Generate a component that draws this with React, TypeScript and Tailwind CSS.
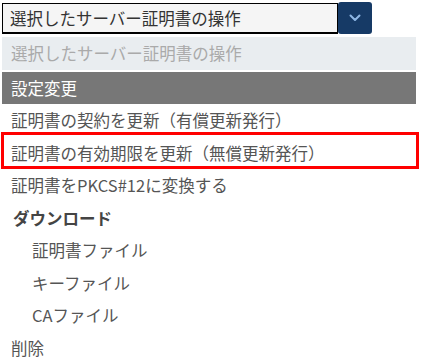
import React from "react";

export default function App() {
  const font = { fontFamily: '"Noto Sans CJK JP", "Noto Sans", sans-serif' };
  return (
    <div className="w-[424px] h-[360px] bg-white overflow-hidden text-[16.5px] text-[#555]" style={font}>
      <div className="flex items-start pt-[2px] pl-[2px]">
        <div className="w-[336px] h-[31px] mt-[1px] border border-black border-b-2 bg-[#f5f5f5] flex items-center pl-[7px] text-[#333] leading-none">
          選択したサーバー証明書の操作
        </div>
        <div className="w-[34px] h-[32px] bg-[#163a66] rounded-[3px] flex items-center justify-center">
          <svg width="12" height="8" viewBox="0 0 12 8" fill="none">
            <path d="M1.5 1.5 L6 6 L10.5 1.5" stroke="#8fb8e6" strokeWidth="2" strokeLinecap="round" strokeLinejoin="round" />
          </svg>
        </div>
      </div>
      <div className="ml-[2px] w-[414px] flex flex-col mt-[3px]">
        <div className="h-[33px] shrink-0 bg-[#e9edf0] flex items-center pl-[9px] text-[#aaa] leading-none">選択したサーバー証明書の操作</div>
        <div className="h-[32px] shrink-0 mt-[2px] bg-[#777777] flex items-center pl-[9px] text-white leading-none">設定変更</div>
        <div className="h-[33px] shrink-0 flex items-center pl-[9px] leading-none">証明書の契約を更新（有償更新発行）</div>
        <div className="relative h-[32px] shrink-0 flex items-center pl-[9px] leading-none">
          証明書の有効期限を更新（無償更新発行）
          <div className="absolute -left-[1px] -right-[3px] -top-[5px] -bottom-[0px] border-[3px] border-[#ff0000]" />
        </div>
        <div className="h-[33px] shrink-0 flex items-center pl-[9px] leading-none">証明書をPKCS#12に変換する</div>
        <div className="h-[32px] shrink-0 flex items-center pl-[11px] font-bold text-[#444] leading-none">ダウンロード</div>
        <div className="h-[33px] shrink-0 flex items-center pl-[30px] leading-none">証明書ファイル</div>
        <div className="h-[32px] shrink-0 flex items-center pl-[30px] leading-none">キーファイル</div>
        <div className="h-[33px] shrink-0 flex items-center pl-[30px] leading-none">CAファイル</div>
        <div className="h-[32px] shrink-0 flex items-center pl-[9px] leading-none">削除</div>
      </div>
    </div>
  );
}
